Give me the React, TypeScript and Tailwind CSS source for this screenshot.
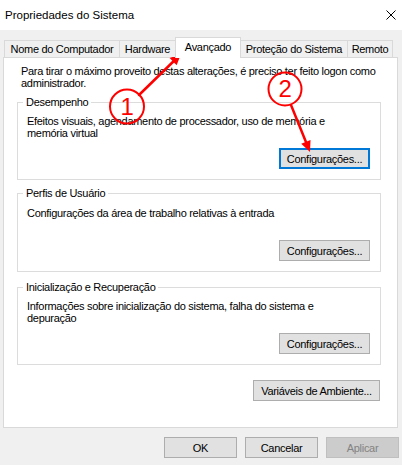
import type { ReactNode } from "react";

const TABS = [
  { label: "Nome do Computador", w: "w-[116px]" },
  { label: "Hardware", w: "w-[57px]" },
  { label: "Avançado", w: "w-[66px]", active: true },
  { label: "Proteção do Sistema", w: "w-[108px]" },
  { label: "Remoto", w: "w-[46px]" },
];

const RED = "#ff0000";

function Button({
  children,
  className = "",
  focused,
  disabled,
}: {
  children: ReactNode;
  className?: string;
  focused?: boolean;
  disabled?: boolean;
}) {
  let look = "border border-[#adadad] bg-[#e1e1e1] text-black";
  if (focused) look = "border-2 border-[#0078d7] bg-[#e1e1e1] text-black";
  if (disabled) look = "border border-[#bfbfbf] bg-[#cccccc] text-[#838383]";
  return (
    <button
      type="button"
      disabled={disabled}
      className={`flex h-[21px] items-center justify-center ${look} ${className}`}
    >
      {children}
    </button>
  );
}

function GroupBox({
  title,
  children,
  top,
  pad,
  focused,
}: {
  title: string;
  children: ReactNode;
  top: string;
  pad: string;
  focused?: boolean;
}) {
  return (
    <fieldset className={`ml-[13px] w-[364px] border border-[#dcdcdc] p-0 ${top}`}>
      <legend className="ml-[5px] px-[3px]">{title}</legend>
      <div className={`pl-[9px] pr-[10px] pb-[10px] ${pad}`}>
        <div className="h-[24px]">{children}</div>
        <div className="mt-[9px] flex justify-end">
          <Button className="w-[91px]" focused={focused}>
            Configurações...
          </Button>
        </div>
      </div>
    </fieldset>
  );
}

function arrow(x1: number, y1: number, x2: number, y2: number) {
  const dx = x2 - x1;
  const dy = y2 - y1;
  const len = Math.hypot(dx, dy);
  const ux = dx / len;
  const uy = dy / len;
  const hl = 11;
  const hw = 5;
  const bx = x2 - ux * hl;
  const by = y2 - uy * hl;
  return {
    line: { x1, y1, x2: bx + ux, y2: by + uy },
    head: `${x2},${y2} ${bx - uy * hw},${by + ux * hw} ${bx + uy * hw},${by - ux * hw}`,
  };
}

function Annotations() {
  const a1 = arrow(139, 95, 181, 54);
  const a2 = arrow(291, 105, 310, 152);
  return (
    <svg
      className="pointer-events-none absolute inset-0"
      width={402}
      height={465}
      viewBox="0 0 402 465"
    >
      {[a1, a2].map((a, i) => (
        <g key={i}>
          <line {...a.line} stroke={RED} strokeWidth={2.5} strokeLinecap="round" />
          <polygon points={a.head} fill={RED} />
        </g>
      ))}
      <circle cx={127} cy={106.5} r={17} fill="none" stroke={RED} strokeWidth={2} />
      <circle cx={285} cy={89} r={16.5} fill="none" stroke={RED} strokeWidth={2} />
      <text
        x={127}
        y={115}
        fill={RED}
        fontSize={24}
        textAnchor="middle"
        fontFamily="'Liberation Sans', Arial, sans-serif"
      >
        1
      </text>
      <text
        x={285}
        y={97}
        fill={RED}
        fontSize={24}
        textAnchor="middle"
        fontFamily="'Liberation Sans', Arial, sans-serif"
      >
        2
      </text>
    </svg>
  );
}

export default function App() {
  return (
    <div className="relative h-[465px] w-[402px] overflow-hidden bg-[#f0f0f0] font-['Liberation_Sans',Arial,sans-serif] text-[11px] leading-[12px] tracking-[-0.3px] text-black">
      {/* title bar */}
      <div className="flex h-[30px] items-center justify-between bg-white pl-[5px] pr-[6px]">
        <span className="text-[11.5px] tracking-normal">Propriedades do Sistema</span>
        <svg width={10} height={10} viewBox="0 0 10 10">
          <path d="M0.5 0.5 L9.5 9.5 M9.5 0.5 L0.5 9.5" stroke="#000" strokeWidth={1} />
        </svg>
      </div>

      {/* tabs */}
      <div className="relative z-10 -mb-px mt-[7px] flex h-[21px] items-end pl-[4px]">
        {TABS.map((t, i) =>
          t.active ? (
            <div
              key={t.label}
              className={`relative z-10 flex h-[21px] items-center justify-center border border-b-0 border-[#d9d9d9] bg-white pb-[2px] ${t.w} ${i > 0 ? "-ml-px" : ""}`}
            >
              {t.label}
            </div>
          ) : (
            <div
              key={t.label}
              className={`mb-px flex h-[17px] items-center justify-center border border-b-0 border-[#d9d9d9] bg-[#f0f0f0] ${t.w} ${i > 0 ? "-ml-px" : ""}`}
            >
              {t.label}
            </div>
          )
        )}
      </div>

      {/* panel */}
      <div className="ml-[3px] h-[371px] w-[395px] border border-[#d9d9d9] bg-white pt-[7px]">
        <p className="pl-[17px]">
          Para tirar o máximo proveito destas alterações, é preciso ter feito logon como
          <br />
          administrador.
        </p>

        <GroupBox title="Desempenho" top="mt-[7px]" pad="pt-[7px]" focused>
          Efeitos visuais, agendamento de processador, uso de memória e
          <br />
          memória virtual
        </GroupBox>

        <GroupBox title="Perfis de Usuário" top="mt-[7px]" pad="pt-[8px]">
          Configurações da área de trabalho relativas à entrada
        </GroupBox>

        <GroupBox title="Inicialização e Recuperação" top="mt-[9px]" pad="pt-[7px]">
          Informações sobre inicialização do sistema, falha do sistema e
          <br />
          depuração
        </GroupBox>

        <div className="mt-[15px] flex justify-end pr-[17px]">
          <Button className="w-[127px]">Variáveis de Ambiente...</Button>
        </div>
      </div>

      {/* dialog buttons */}
      <div className="mt-[9px] flex justify-end gap-[8px] pr-[3px]">
        <Button className="w-[73px]">OK</Button>
        <Button className="w-[73px]">Cancelar</Button>
        <Button className="w-[73px]" disabled>
          Aplicar
        </Button>
      </div>

      <Annotations />
    </div>
  );
}
